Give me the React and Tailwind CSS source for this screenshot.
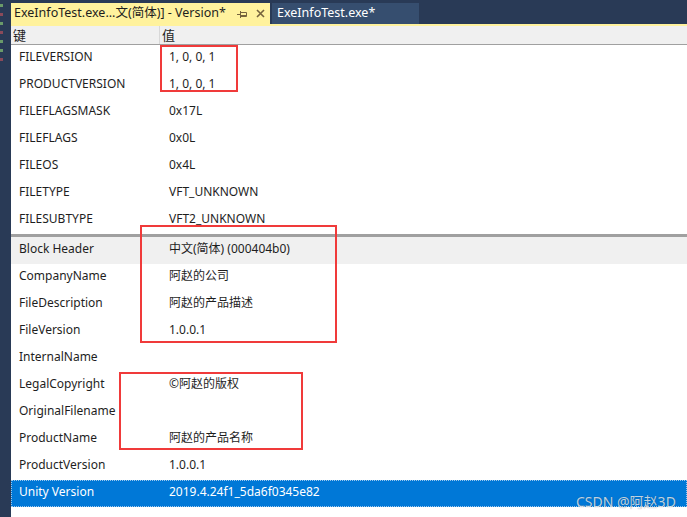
import React from "react";

const topRows = [
  ["FILEVERSION", "1, 0, 0, 1"],
  ["PRODUCTVERSION", "1, 0, 0, 1"],
  ["FILEFLAGSMASK", "0x17L"],
  ["FILEFLAGS", "0x0L"],
  ["FILEOS", "0x4L"],
  ["FILETYPE", "VFT_UNKNOWN"],
  ["FILESUBTYPE", "VFT2_UNKNOWN"],
];

const blockRows = [
  ["CompanyName", "阿赵的公司"],
  ["FileDescription", "阿赵的产品描述"],
  ["FileVersion", "1.0.0.1"],
  ["InternalName", ""],
  ["LegalCopyright", "©阿赵的版权"],
  ["OriginalFilename", ""],
  ["ProductName", "阿赵的产品名称"],
  ["ProductVersion", "1.0.0.1"],
];

const font = "font-['Segoe_UI','Noto_Sans','Noto_Sans_CJK_SC',sans-serif]";

function Row({ k, v, className = "" }) {
  return (
    <div className={`flex h-[27px] items-center pb-[3px] text-[12px] text-[#1e1e1e] ${className}`}>
      <div className="w-[149px] shrink-0 pl-[8px] whitespace-nowrap">{k}</div>
      <div className="pl-[9px] whitespace-nowrap">{v}</div>
    </div>
  );
}

function RedBox({ className }) {
  return <div className={`absolute border-2 border-[#f03a3a] ${className}`} />;
}

export default function App() {
  return (
    <div className={`relative flex h-[517px] w-[687px] overflow-hidden bg-[#293a56] ${font}`}>
      {/* left gutter with the little margin markers */}
      <div className="flex w-[11px] shrink-0 flex-col gap-[6px] pt-[4px]">
        <div className="h-[3px] w-[3px] bg-[#6a9a6a]" />
        <div className="h-[3px] w-[3px] bg-[#8a4a5a]" />
        <div className="h-[3px] w-[3px] bg-[#6a9a6a]" />
        <div className="h-[3px] w-[3px] bg-[#8a4a5a]" />
        <div className="h-[3px] w-[3px] bg-[#6a9a6a]" />
        <div className="h-[3px] w-[3px] bg-[#6a9a6a]" />
        <div className="h-[3px] w-[3px] bg-[#8a4a5a]" />
      </div>

      <div className="flex min-w-0 flex-1 flex-col">
        {/* tabs */}
        <div className="flex h-[24px] items-end gap-[2px]">
          <div className="flex h-[21px] w-[259px] items-center bg-[#fff29d] pl-[3px] text-[12.5px] text-[#1e1e1e] whitespace-nowrap">
            <span className="w-[219px] overflow-hidden">ExeInfoTest.exe...文(简体)] - Version*</span>
            <svg width="10" height="8" viewBox="0 0 10 8" className="ml-[4px]">
              <path d="M0 4.5H3M3.5 1V8M3.5 2.5H9.5V6.5H3.5M3.5 5.5H9.5" stroke="#75633d" strokeWidth="1" fill="none" />
            </svg>
            <svg width="9" height="9" viewBox="0 0 9 9" className="ml-[9px]">
              <path d="M1 1L8 8M8 1L1 8" stroke="#75633d" strokeWidth="1.6" />
            </svg>
          </div>
          <div className="flex h-[21px] w-[147px] items-center bg-[#364e6f] pl-[5px] text-[12.5px] text-white whitespace-nowrap">
            ExeInfoTest.exe*
          </div>
        </div>
        <div className="h-[2px] bg-[#fff29d]" />

        {/* table */}
        <div className="flex flex-1 flex-col bg-white">
          <div className="flex h-[19px] border-b border-[#a0a0a0] bg-[#f0f0f0] text-[13px] text-[#1e1e1e]">
            <div className="w-[149px] shrink-0 border-r border-[#d8d8d8] pl-[2px] leading-[18px]">键</div>
            <div className="pl-[2px] leading-[18px]">值</div>
          </div>

          {topRows.map(([k, v]) => (
            <Row key={k} k={k} v={v} />
          ))}

          <div className="h-[3px] bg-[#a0a0a0]" />
          <Row k="Block Header" v="中文(简体) (000404b0)" className="bg-[#f0f0f0]" />

          {blockRows.map(([k, v]) => (
            <Row key={k} k={k} v={v} />
          ))}

          <div className="flex h-[27px] items-center border border-dotted border-[#9cc8ee] bg-[#0078d7] pb-[3px] text-[12px] text-white">
            <div className="w-[148px] shrink-0 pl-[7px] whitespace-nowrap">Unity Version</div>
            <div className="pl-[9px] whitespace-nowrap">2019.4.24f1_5da6f0345e82</div>
          </div>
        </div>
      </div>

      <RedBox className="left-[160px] top-[45px] h-[47px] w-[78px]" />
      <RedBox className="left-[140px] top-[225px] h-[118px] w-[197px]" />
      <RedBox className="left-[119px] top-[372px] h-[78px] w-[184px]" />

      <div className="absolute left-[576px] top-[491px] text-[14px] text-white/75 [text-shadow:0_0_1px_rgba(0,0,0,0.4)] whitespace-nowrap">
        CSDN @阿赵3D
      </div>
    </div>
  );
}
